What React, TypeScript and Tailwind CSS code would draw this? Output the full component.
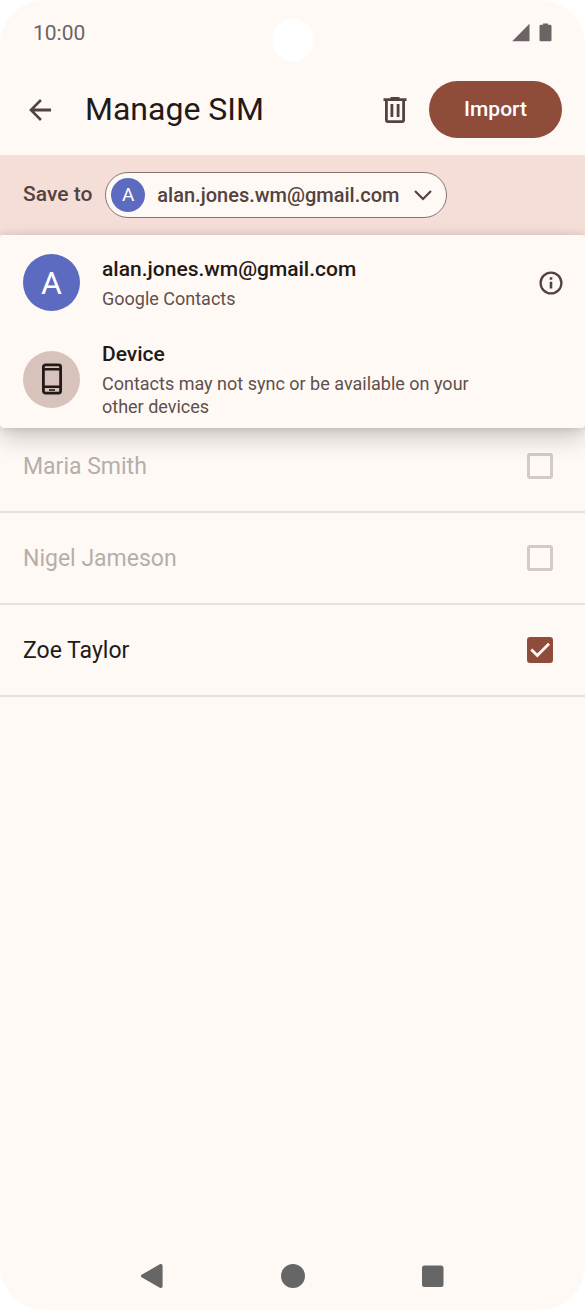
import { useState } from "react";

type Contact = { name: string; enabled: boolean };

const contacts: Contact[] = [
  { name: "Maria Smith", enabled: false },
  { name: "Nigel Jameson", enabled: false },
  { name: "Zoe Taylor", enabled: true },
];

function StatusBar() {
  return (
    <div className="flex h-16 items-center justify-between pr-8 pl-[33px] text-[#6b6365]">
      <time className="pt-[2px] text-[21px] leading-6">10:00</time>
      <div className="flex items-center gap-2 pr-px">
        <svg width="19" height="19" viewBox="0 0 19 19" fill="currentColor" role="img" aria-label="Signal">
          <path d="M17.500 .8v17.400H.2z" />
        </svg>
        <svg width="13" height="19" viewBox="0 0 13 19" fill="currentColor" role="img" aria-label="Battery">
          <path d="M4 .5h5v1.300h2.200c.7 0 1.300.6 1.300 1.300v13.800c0 .7-.6 1.300-1.300 1.300H1.800C1.100 18.200.5 17.600.5 16.900V3.100C.5 2.400 1.100 1.800 1.800 1.800H4z" />
        </svg>
      </div>
    </div>
  );
}

function Header() {
  return (
    <header className="flex h-[91px] items-center px-[23px]">
      <button type="button" aria-label="Back" className="text-[#534340]">
        <svg width="34" height="34" viewBox="0 0 24 24" fill="currentColor">
          <path d="M19.800 11v2H8l5.300 5.300L12 19.700 4.300 12 12 4.300l1.300 1.400L8 11z" />
        </svg>
      </button>
      <h1 className="ml-7 flex-1 pb-[2px] text-[32px] leading-10 text-[#231917]">Manage SIM</h1>
      <button type="button" aria-label="Delete" className="mr-[17px] text-[#534340]">
        <svg width="34" height="34" viewBox="0 0 34 34" fill="currentColor">
          <path
            fillRule="evenodd"
            d="M12.500 4h9v1.300H28.500V8H27V27a3 3 0 0 1-3 3H10a3 3 0 0 1-3-3V8H5.500V5.300h7zM9.800 8V27.200h14.400V8zM12.500 11h2.800v13h-2.800zM18.700 11h2.800v13h-2.800z"
          />
        </svg>
      </button>
      <button type="button" className="h-[57px] rounded-full bg-[#8f4c3b] px-[35px] text-[21px] font-medium text-white">
        Import
      </button>
    </header>
  );
}

function AccountPicker() {
  const [open, setOpen] = useState(true);
  return (
    <section className="relative flex h-20 items-center bg-[#f5ddd8] px-[23px]">
      <span id="save-to" className="text-[21px] font-medium text-[#534340]">
        Save to
      </span>
      <button
        type="button"
        aria-haspopup="menu"
        aria-expanded={open}
        aria-labelledby="save-to account"
        onClick={() => setOpen(!open)}
        className="ml-[13px] flex h-[46px] items-center rounded-full border border-[#857370] bg-[#fff9f5] pr-3 pl-[5px] text-[#534340]"
      >
        <span className="flex size-[34px] items-center justify-center rounded-full bg-[#5c6bc0] text-[19px] text-white">
          A
        </span>
        <span id="account" className="ml-3 text-[20px] font-medium">
          alan.jones.wm@gmail.com
        </span>
        <svg className="ml-[13px]" width="22" height="22" viewBox="0 0 22 22" fill="none" stroke="currentColor" strokeWidth="2.200">
          <path d="M3 7l8 8 8-8" />
        </svg>
      </button>
      {open && <AccountMenu />}
    </section>
  );
}

function AccountMenu() {
  return (
    <ul className="absolute inset-x-0 top-full z-10 rounded-[4px] bg-[#fff9f5] pt-[19px] pb-[10px] shadow-[0_10px_24px_rgba(0,0,0,0.200),0_1px_8px_rgba(0,0,0,0.120)]">
      <li className="flex items-center pr-[22px] pl-[23px]">
        <button type="button" className="flex flex-1 items-center gap-[22px] text-left">
          <span className="flex size-[57px] shrink-0 items-center justify-center rounded-full bg-[#5c6bc0] text-[32px] text-white">
            A
          </span>
          <span className="flex flex-col gap-1">
            <span className="text-[21px] leading-7 font-medium text-[#231917]">alan.jones.wm@gmail.com</span>
            <span className="text-[18px] leading-[23px] text-[#5f504d]">Google Contacts</span>
          </span>
        </button>
        <button type="button" aria-label="Account details" className="text-[#534340]">
          <svg width="24" height="24" viewBox="0 0 24 24" fill="none" stroke="currentColor" strokeWidth="2.300">
            <circle cx="12" cy="12" r="10.400" />
            <path d="M12 10.700V17.600M12 6.200v2.600" strokeWidth="2.600" />
          </svg>
        </button>
      </li>
      <li className="mt-[29px] px-[23px]">
        <button type="button" className="flex w-full items-center gap-[22px] text-left">
          <span className="flex size-[57px] shrink-0 items-center justify-center rounded-full bg-[#d8c2bc] text-[#231917]">
            <svg width="20" height="32" viewBox="0 0 20 32" fill="none" stroke="currentColor" strokeWidth="2.800">
              <rect x="1.400" y="1.900" width="17.200" height="28.200" rx="2" />
              <path d="M1 6.200h18M1 23.800h18" strokeWidth="2.400" />
              <path d="M7 27h6" strokeWidth="1.600" />
            </svg>
          </span>
          <span className="flex flex-col gap-1">
            <span className="text-[21px] leading-7 font-medium text-[#231917]">Device</span>
            <span className="max-w-[380px] text-[18px] leading-[23px] text-[#5f504d]">
              Contacts may not sync or be available on your other devices
            </span>
          </span>
        </button>
      </li>
    </ul>
  );
}

function ContactRow({ contact }: { contact: Contact }) {
  const [checked, setChecked] = useState(contact.enabled);
  return (
    <li className="border-b-2 border-[#e6dfdc]">
      <label
        className={`flex h-[90px] items-center justify-between pr-8 pl-[23px] text-[23px] ${
          contact.enabled ? "text-[#231917]" : "text-[#b5aeab]"
        }`}
      >
        <span className="pt-[3px]">{contact.name}</span>
        <span className="grid place-items-center">
          <input
            type="checkbox"
            checked={checked}
            disabled={!contact.enabled}
            onChange={(e) => setChecked(e.target.checked)}
            className="col-start-1 row-start-1 size-[26px] appearance-none rounded-[3px] border-3 border-[#d4cac8] checked:border-[#8f4c3b] checked:bg-[#8f4c3b]"
          />
          {checked && (
            <svg
              className="pointer-events-none col-start-1 row-start-1"
              width="26"
              height="26"
              viewBox="0 0 26 26"
              fill="none"
              stroke="#fff9f5"
              strokeWidth="2.800"
            >
              <path d="M4.300 12.500l6 6L22 6.800" />
            </svg>
          )}
        </span>
      </label>
    </li>
  );
}

function NavigationBar() {
  return (
    <nav className="flex h-[68px] items-center justify-center gap-[114px] text-[#666666]">
      <button type="button" aria-label="Navigate back">
        <svg width="26" height="26" viewBox="0 0 26 26" fill="currentColor">
          <path d="M1.600 11.800 19.800 1.300C21.300.500 22.600 1.300 22.600 3v20c0 1.700-1.300 2.500-2.800 1.700L1.600 14.200c-1-.6-1-1.800 0-2.400z" />
        </svg>
      </button>
      <button type="button" aria-label="Home">
        <svg width="26" height="26" viewBox="0 0 26 26" fill="currentColor">
          <circle cx="13" cy="13" r="12" />
        </svg>
      </button>
      <button type="button" aria-label="Recent apps">
        <svg width="26" height="26" viewBox="0 0 26 26" fill="currentColor">
          <rect x="2" y="2.500" width="21.500" height="21.500" rx="2.500" />
        </svg>
      </button>
    </nav>
  );
}

export default function App() {
  return (
    <div className="min-h-screen bg-white font-['Roboto',sans-serif]">
      <div className="relative flex min-h-screen flex-col overflow-hidden rounded-[45px] bg-[#fff9f5]">
        <div className="absolute top-[19px] left-1/2 size-[42px] -translate-x-1/2 rounded-full bg-white" />
        <StatusBar />
        <Header />
        <AccountPicker />
        <main className="flex-1 pt-[186px]">
          <ul>
            {contacts.map((contact) => (
              <ContactRow key={contact.name} contact={contact} />
            ))}
          </ul>
        </main>
        <NavigationBar />
      </div>
    </div>
  );
}
